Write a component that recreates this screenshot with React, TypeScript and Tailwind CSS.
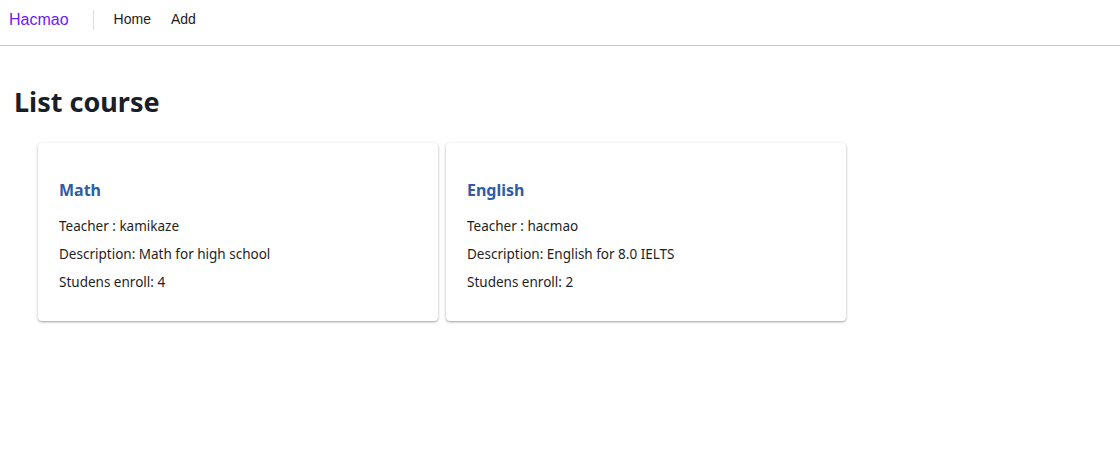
import React from "react";

const courses = [
  { name: "Math", teacher: "kamikaze", desc: "Math for high school", n: 4 },
  { name: "English", teacher: "hacmao", desc: "English for 8.0 IELTS", n: 2 },
];

export default function App() {
  return (
    <div className="min-h-[451px] bg-white">
      <header className="h-[46px] pb-[6px] border-b border-[#c8c8c8] flex items-center font-['Liberation_Sans',sans-serif]">
        <span className="ml-[9px] text-[16px] text-[#6a1bf5]">Hacmao</span>
        <span className="ml-[24px] w-px h-[20px] bg-[#dcdcdc]" />
        <nav className="ml-[20px] flex gap-[20px] text-[14px] text-[#1c1c1c]">
          <span>Home</span>
          <span>Add</span>
        </nav>
      </header>
      <main className="font-['Noto_Sans',sans-serif]">
        <h1 className="mt-[39px] ml-[14px] text-[27px] leading-[34px] font-bold text-[#1a1e27]">List course</h1>
        <div className="mt-[24px] ml-[38px] flex gap-[8px]">
          {courses.map((c) => (
            <div
              key={c.name}
              className="w-[400px] h-[178px] rounded-[4px] bg-white shadow-[0_1px_3px_rgba(0,0,0,0.3),0_1px_1px_rgba(0,0,0,0.1)] px-[21px] pt-[35px]"
            >
              <h2 className="text-[16px] leading-[24px] font-bold text-[#2e5ca8]">{c.name}</h2>
              <div className="mt-[10px] text-[13.5px] leading-[28px] text-[#1e1e1e]">
                <p>Teacher : {c.teacher}</p>
                <p>Description: {c.desc}</p>
                <p>Studens enroll: {c.n}</p>
              </div>
            </div>
          ))}
        </div>
      </main>
    </div>
  );
}
